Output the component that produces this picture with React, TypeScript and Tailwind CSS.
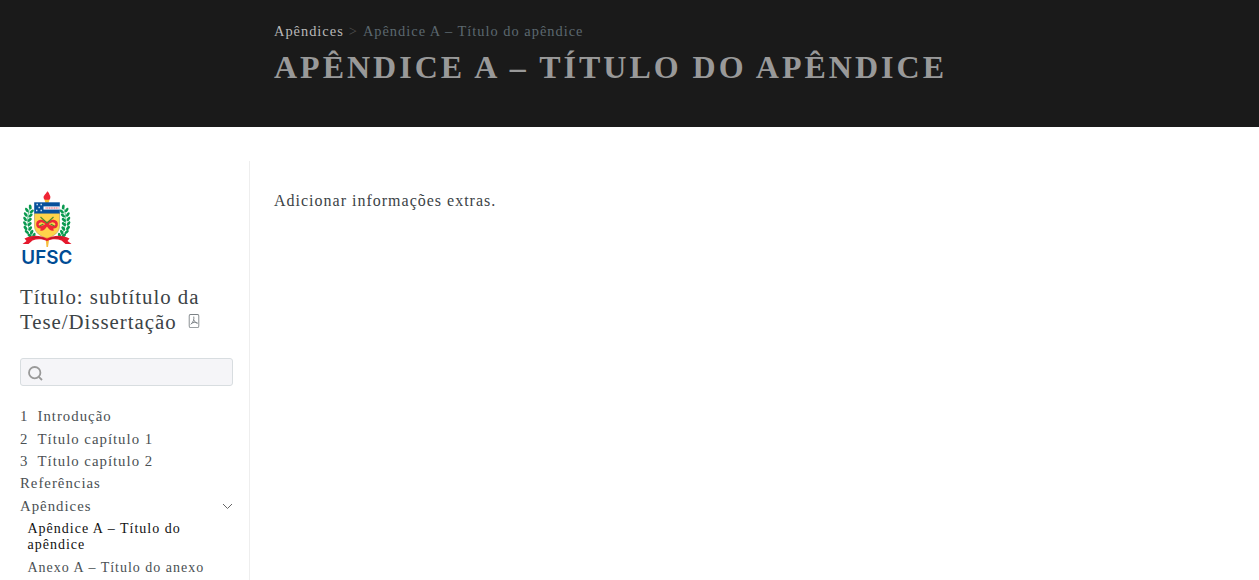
import React from 'react';

const leaves = [
  [8.5, 17, -10], [5, 20, -35], [10, 21.5, 50], [3.8, 24.5, -35], [8.8, 25.5, 50],
  [3.2, 29, -35], [7.9, 29.8, 50], [3.1, 33.5, -35], [7.8, 34.2, 50], [3.6, 38, -40],
  [8.4, 38.5, 40], [5, 42, -50], [10, 42.3, 30], [7.9, 45.5, -55], [12.4, 45.2, 20],
];

function Branch() {
  return (
    <g fill="#0b9a50" transform="translate(1 0) scale(.97 1)">
      <path d="M8.5 17C4.5 26 4.5 39 13 48" fill="none" stroke="#3bb072" strokeWidth=".8" />
      {leaves.map(([x, y, r], i) => (
        <ellipse key={i} cx={x} cy={y} rx="1.45" ry="2.6" transform={`rotate(${r} ${x} ${y})`} />
      ))}
    </g>
  );
}

function Crest() {
  return (
    <svg className="block h-[80px] w-[54px]" viewBox="0 0 54 80" role="img" aria-label="UFSC">
      <Branch />
      <g transform="translate(51.5 0) scale(-1 1)"><Branch /></g>
      <g transform="translate(-.5 0)">
        <path d="M23.5 9C22 5.5 25 5 27 1C27.5 3 28 3 28.5 2C28 5 31 5.5 29.5 9C28 11 25 11 23.5 9Z" fill="#ef2635" />
        <path d="M24 9.8H29L28 13H25Z" fill="#f8bf32" />
        <path d="M14 23H39V36C39 43 33 46 26.5 48.5C20 46 14 43 14 36Z" fill="#ffd34a" stroke="#b8a265" strokeWidth=".7" />
        <path d="M13.7 12.3H39.3V23.5H13.7Z" fill="#07509b" />
        <path d="M23 16.4H39.3V19.6H23Z" fill="#fff" />
        <path d="M25 18H38" stroke="#e4485a" strokeWidth="1" strokeDasharray="1.2 .5" />
        <path d="M16 14.5h1.4M20 14.5h1.4M18 17.5h1.4M15.5 20.5h1.4M20 20.5h1.4" stroke="#dce8f4" strokeWidth="1.3" />
        <path d="M26.5 34C22 29 16.5 31 17 35C18 39 24 37 26.5 34C29 37 35 39 36 35C36.5 31 31 29 26.5 34ZM20 39.5C23 40 25 37 26.5 34C28 37 30 40 33 39.5" fill="none" stroke="#ee2936" strokeWidth="2.6" />
        <path d="M20 27L26.5 33L33 27M19 36L23 34M34 36L30 34" fill="none" stroke="#4d8b2f" strokeWidth="1.2" />
        <path d="M25 47H29L27.5 57H26Z" fill="#f6bd3c" />
        <path d="M2 54L6 51L4 48.5C12 44.5 19 45 26.5 48.5C34 45 41 44.5 49 48.5L47 51L51 54L45 54L41 50.5C36 48.5 31 49 26.5 51C22 49 17 48.5 12 50.5L8 54Z" fill="#e5182c" />
        <path d="M11 48.2Q18 46 24 48.8M29 48.8Q35 46 42 48.2" fill="none" stroke="#a5192a" strokeWidth=".8" />
      </g>
      <text x=".3" y="73.7" textLength="51" lengthAdjust="spacingAndGlyphs" className="fill-[#004c95] font-['Inter',sans-serif] text-[18.5px] font-semibold">UFSC</text>
    </svg>
  );
}

function PdfIcon() {
  return (
    <svg className="ml-2.5 inline-block h-[14px] w-[14px] align-[1px]" viewBox="0 0 16 16" fill="#7b8185" aria-hidden="true">
      <path d="M4 0a2 2 0 0 0-2 2v12a2 2 0 0 0 2 2h8a2 2 0 0 0 2-2V2a2 2 0 0 0-2-2H4zm0 1h8a1 1 0 0 1 1 1v12a1 1 0 0 1-1 1H4a1 1 0 0 1-1-1V2a1 1 0 0 1 1-1z" />
      <path d="M7.8 3.4C8.3 6.5 7.2 9 4.6 11.6M8 7.2C8.8 9 10 10 11.6 10.4M5.7 10.4C7.4 9.4 9.3 9.2 11.6 10.2" fill="none" stroke="#7b8185" strokeWidth="1.1" strokeLinecap="round" />
    </svg>
  );
}

const rowText = 'flex items-baseline text-[14.8px] leading-4 tracking-[1px] text-[#4a5053]';

const chapters = [
  { number: '1', title: 'Introdução' },
  { number: '2', title: 'Título capítulo 1' },
  { number: '3', title: 'Título capítulo 2' },
];

export default function App() {
  return (
    <div className="flex h-[580px] flex-col overflow-hidden bg-white font-['Liberation_Serif',serif] text-[#3c4346]">
      <header className="h-[127px] shrink-0 bg-[#1a1a1a] pl-[274px] pt-[23px]">
        <nav className="flex gap-[5px] text-[14.4px] leading-[17px] tracking-[1px]">
          <a className="text-[#b8b8b8]">Apêndices</a>
          <span className="text-[#505050]">&gt;</span>
          <a className="text-[#5c686f]">Apêndice A – Título do apêndice</a>
        </nav>
        <h1 className="mt-[7px] whitespace-nowrap text-[32px] font-bold leading-[41px] tracking-[3px] text-[#999]">APÊNDICE A – TÍTULO DO APÊNDICE</h1>
      </header>
      <div className="flex min-h-0 flex-1 pt-[34px]">
        <aside className="w-[250px] shrink-0 border-r border-[#eeeeee] pl-5 pr-4 pt-[29px]">
          <div className="ml-px"><Crest /></div>
          <h2 className="mt-[14px] whitespace-nowrap text-[20.8px] leading-[25px] tracking-[1px]">
            Título: subtítulo da<br />Tese/Dissertação<PdfIcon />
          </h2>
          <div className="mt-6 flex h-7 w-[213px] items-center rounded-[3px] border border-[#d8dde0] bg-[#f5f5f8] pl-[7px]">
            <svg className="mt-0.5 h-[15px] w-[15px]" viewBox="0 0 15 15" fill="none" stroke="#999" strokeWidth="1.8"><circle cx="6.7" cy="6.7" r="5.7" /><path d="M10.8 10.8L14 14" /></svg>
          </div>
          <nav className="mt-[22.2px] flex flex-col gap-[6.35px]">
            {chapters.map((item) => (
              <a key={item.number} className={rowText}><span className="w-[17.5px]">{item.number}</span>{item.title}</a>
            ))}
            <a className={rowText}>Referências</a>
            <div className={`${rowText} justify-between`}>
              Apêndices
              <svg className="h-[10px] w-[11px] self-center" viewBox="0 0 11 10" fill="none" stroke="#666" strokeWidth="1"><path d="M1 3L5.5 7.5L10 3" /></svg>
            </div>
            <a className="ml-[7.5px] mt-[.6px] text-[14px] leading-4 tracking-[1px] text-[#111]">Apêndice A – Título do<br />apêndice</a>
            <a className="ml-[7.5px] mt-[1.2px] whitespace-nowrap text-[14px] leading-4 tracking-[1px] text-[#4a5053]">Anexo A – Título do anexo</a>
          </nav>
        </aside>
        <main className="pl-6 pt-[28px]">
          <p className="text-[16px] leading-6 tracking-[1px]">Adicionar informações extras.</p>
        </main>
      </div>
    </div>
  );
}
